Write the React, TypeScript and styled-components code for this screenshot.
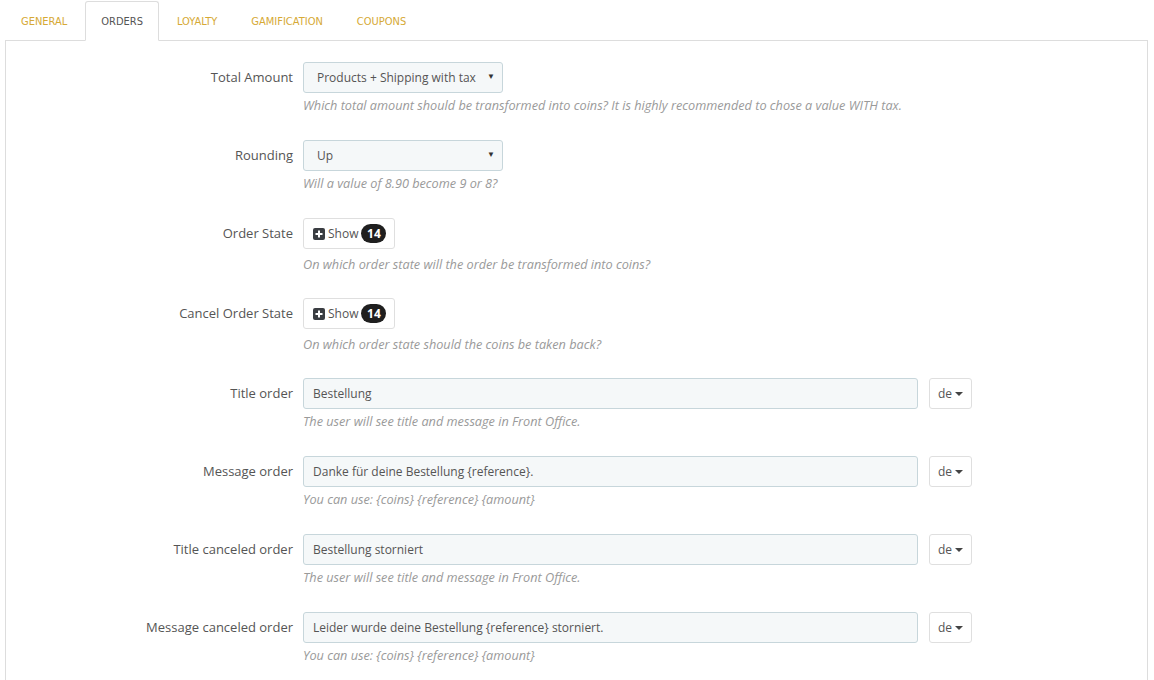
import React from "react";
import styled, { createGlobalStyle } from "styled-components";

const Global = createGlobalStyle`
  html, body { margin: 0; padding: 0; background: #fff; }
  body { font-family: "Open Sans", "Liberation Sans", sans-serif; color: #555; }
  * { box-sizing: border-box; }
`;

const Page = styled.div`
  width: 1154px;
  height: 680px;
  overflow: hidden;
  padding: 1px 6px 0 5px;
`;

const Tabs = styled.ul`
  display: flex;
  list-style: none;
  margin: 0;
  padding: 0;
  height: 39px;
`;

const Tab = styled.li<{ $active?: boolean }>`
  margin-right: 2px;
  padding: 0 15px;
  height: 40px;
  display: flex;
  align-items: center;
  font-family: "Ubuntu Condensed", "Liberation Sans Narrow", "DejaVu Sans Condensed", "Open Sans", sans-serif;
  font-stretch: condensed;
  font-size: 11px;
  text-transform: uppercase;
  color: ${(p) => (p.$active ? "#555" : "#d6a935")};
  background: ${(p) => (p.$active ? "#fff" : "transparent")};
  border: 1px solid ${(p) => (p.$active ? "#ddd" : "transparent")};
  border-bottom-color: ${(p) => (p.$active ? "#fff" : "transparent")};
  border-radius: 3px 3px 0 0;
  position: relative;
  z-index: 1;
`;

const Panel = styled.div`
  border: 1px solid #ddd;
  border-bottom: none;
  background: #fff;
  height: 700px;
  padding-top: 21px;
`;

const Row = styled.div<{ $tall?: boolean }>`
  display: grid;
  grid-template-columns: 287px 1fr;
  column-gap: 10px;
  margin-bottom: ${(p) => (p.$tall ? "25px" : "26px")};
`;

const Label = styled.label`
  text-align: right;
  font-size: 13px;
  line-height: 31px;
  color: #555;
  white-space: nowrap;
`;

const Controls = styled.div`
  display: flex;
  flex-direction: column;
`;

const Line = styled.div`
  display: flex;
  align-items: center;
  gap: 11px;
`;

const Help = styled.div<{ $top?: number }>`
  margin-top: ${(p) => p.$top ?? 3}px;
  font-size: 12.7px;
  line-height: 18px;
  font-style: italic;
  color: #9a9a9a;
  white-space: nowrap;
`;

const Select = styled.div`
  width: 200px;
  height: 31px;
  background: #f5f8f9;
  border: 1px solid #c7d6db;
  border-radius: 3px;
  display: flex;
  align-items: center;
  justify-content: space-between;
  padding: 0 7px 0 13px;
  font-size: 12px;
  color: #555;
`;

const Arrow = styled.span`
  font-size: 8px;
  color: #333;
  margin-top: -5px;
`;

const TextInput = styled.div`
  width: 615px;
  height: 31px;
  background: #f5f8f9;
  border: 1px solid #c7d6db;
  border-radius: 3px;
  display: flex;
  align-items: center;
  padding: 0 9px;
  font-size: 12px;
  color: #555;
`;

const Button = styled.button`
  height: 31px;
  background: #fff;
  border: 1px solid #dfdfdf;
  border-radius: 3px;
  display: inline-flex;
  align-items: center;
  font-family: "Open Sans", "Liberation Sans", sans-serif;
  font-size: 12px;
  color: #555;
  padding: 0 8px 0 9px;
  gap: 2px;
  align-self: flex-start;
`;

const LangButton = styled(Button)`
  width: 43px;
  padding: 0 0 0 8px;
  gap: 3px;
`;

const Caret = styled.span`
  width: 0;
  height: 0;
  border-left: 4px solid transparent;
  border-right: 4px solid transparent;
  border-top: 4px solid #444;
`;

const Badge = styled.span`
  display: inline-flex;
  align-items: center;
  justify-content: center;
  height: 19px;
  min-width: 25px;
  padding: 0 5px;
  border-radius: 10px;
  background: #1f1f1f;
  color: #fff;
  font-weight: 700;
  font-size: 12px;
  margin-left: 1px;
`;

const PlusIcon = () => (
  <svg width="12" height="12" viewBox="0 0 12 12" style={{ marginRight: 1 }}>
    <rect x="0" y="0" width="12" height="12" rx="2" fill="#3a3d42" />
    <rect x="5" y="2.5" width="2" height="7" fill="#fff" />
    <rect x="2.5" y="5" width="7" height="2" fill="#fff" />
  </svg>
);

const tabs = ["General", "Orders", "Loyalty", "Gamification", "Coupons"];

const textRows = [
  { label: "Title order", value: "Bestellung", help: "The user will see title and message in Front Office." },
  { label: "Message order", value: "Danke für deine Bestellung {reference}.", help: "You can use: {coins} {reference} {amount}" },
  { label: "Title canceled order", value: "Bestellung storniert", help: "The user will see title and message in Front Office." },
  { label: "Message canceled order", value: "Leider wurde deine Bestellung {reference} storniert.", help: "You can use: {coins} {reference} {amount}" },
];

export default function App() {
  return (
    <>
      <Global />
      <Page>
        <Tabs>
          {tabs.map((t) => (
            <Tab key={t} $active={t === "Orders"}>
              {t}
            </Tab>
          ))}
        </Tabs>
        <Panel>
          <Row>
            <Label>Total Amount</Label>
            <Controls>
              <Select>
                <span>Products + Shipping with tax</span>
                <Arrow>▼</Arrow>
              </Select>
              <Help>
                Which total amount should be transformed into coins? It is highly recommended to chose a value WITH tax.
              </Help>
            </Controls>
          </Row>
          <Row>
            <Label>Rounding</Label>
            <Controls>
              <Select>
                <span>Up</span>
                <Arrow>▼</Arrow>
              </Select>
              <Help>Will a value of 8.90 become 9 or 8?</Help>
            </Controls>
          </Row>
          <Row $tall>
            <Label>Order State</Label>
            <Controls>
              <Button>
                <PlusIcon />
                Show
                <Badge>14</Badge>
              </Button>
              <Help $top={6}>On which order state will the order be transformed into coins?</Help>
            </Controls>
          </Row>
          <Row $tall>
            <Label>Cancel Order State</Label>
            <Controls>
              <Button>
                <PlusIcon />
                Show
                <Badge>14</Badge>
              </Button>
              <Help $top={6}>On which order state should the coins be taken back?</Help>
            </Controls>
          </Row>
          {textRows.map((r) => (
            <Row key={r.label}>
              <Label>{r.label}</Label>
              <Controls>
                <Line>
                  <TextInput>{r.value}</TextInput>
                  <LangButton>
                    de
                    <Caret />
                  </LangButton>
                </Line>
                <Help>{r.help}</Help>
              </Controls>
            </Row>
          ))}
        </Panel>
      </Page>
    </>
  );
}
